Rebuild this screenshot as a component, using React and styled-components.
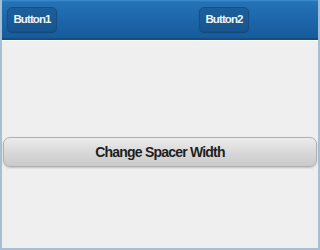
import React from "react";
import styled, { createGlobalStyle } from "styled-components";

const Global = createGlobalStyle`
  html, body { margin: 0; padding: 0; background: #eeeeee; }
  body { font-family: "Liberation Sans", Arial, sans-serif; }
`;

const Frame = styled.div`
  box-sizing: border-box;
  width: 320px;
  height: 250px;
  border: 2px solid #a7bfd4;
  border-top: none;
  background: #efefef;
  display: flex;
  flex-direction: column;
`;

const Header = styled.div`
  box-sizing: border-box;
  height: 40px;
  display: flex;
  align-items: center;
  padding: 0 5px;
  background: linear-gradient(#3f8fd2 0, #2572b6 2px, #1d67aa 50%, #175b9b 100%);
  border-bottom: 2px solid #164e82;
`;

const HeaderButton = styled.button`
  box-sizing: border-box;
  width: 50px;
  height: 25px;
  padding: 0;
  border: 1px solid #164f86;
  border-radius: 5px;
  background: linear-gradient(#1d5f9b, #185590);
  color: #eef4fb;
  font-family: "Liberation Sans", Arial, sans-serif;
  font-weight: bold;
  font-size: 11.5px;
  letter-spacing: -0.9px;
  box-shadow: 0 1px 1px rgba(0,0,0,0.25);
`;

const Spacer = styled.div`
  width: ${p => p.$w}px;
  flex: none;
`;

const Content = styled.div`
  flex: 1;
  display: flex;
  flex-direction: column;
  padding: 96px 1px 0;
  border-top: 1px solid #f8fbff;
`;

const WideButton = styled.button`
  box-sizing: border-box;
  width: 100%;
  height: 30px;
  border: 1px solid #b0b0b0;
  border-radius: 7px;
  background: linear-gradient(#ececec, #d9d9d9 50%, #c9c9c9);
  color: #1e1e1e;
  font-family: "Liberation Sans", Arial, sans-serif;
  font-weight: bold;
  font-size: 14px;
  letter-spacing: -0.8px;
  box-shadow: 0 1px 2px rgba(0,0,0,0.2);
`;

export default function App() {
  return (
    <>
      <Global />
      <Frame>
        <Header>
          <HeaderButton>Button1</HeaderButton>
          <Spacer $w={142} />
          <HeaderButton>Button2</HeaderButton>
        </Header>
        <Content>
          <WideButton>Change Spacer Width</WideButton>
        </Content>
      </Frame>
    </>
  );
}
